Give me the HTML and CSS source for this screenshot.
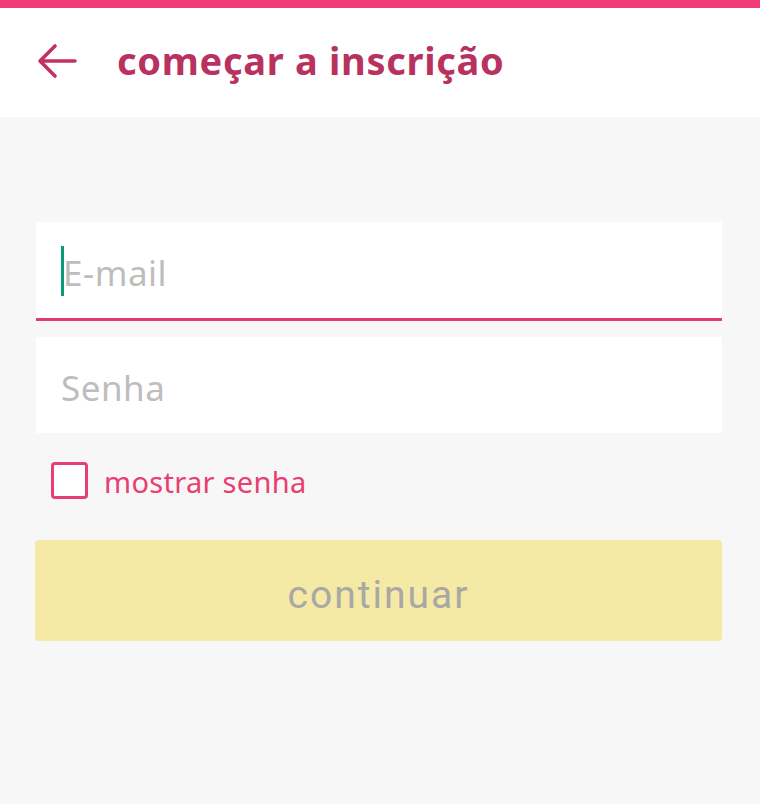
FILE: index.html
```html
<!DOCTYPE html>
<html lang="pt">
<head>
<meta charset="utf-8">
<link rel="stylesheet" href="styles.css">
</head>
<body>
<div class="topbar"></div>
<header class="header">
  <svg class="back" width="40" height="36" viewBox="0 0 40 36">
    <path d="M38 18H3M18 3L3 18L18 33" fill="none" stroke="#c2315f" stroke-width="3.6" stroke-linecap="round" stroke-linejoin="round"/>
  </svg>
  <h1 class="title">começar a inscrição</h1>
</header>
<main class="content">
  <div class="field field-active">
    <span class="caret"></span>
    <span class="placeholder">E-mail</span>
  </div>
  <div class="field">
    <span class="placeholder">Senha</span>
  </div>
  <label class="check">
    <span class="box"></span>
    <span class="check-label">mostrar senha</span>
  </label>
  <div class="button">continuar</div>
</main>
</body>
</html>
```

FILE: styles.css
```css
html, body {
  margin: 0;
  padding: 0;
}
body {
  width: 760px;
  height: 804px;
  background: #f7f7f7;
  font-family: "Noto Sans", "Open Sans", sans-serif;
  overflow: hidden;
}
.topbar {
  height: 8px;
  background: #f03b77;
}
.header {
  height: 109px;
  background: #ffffff;
  display: flex;
  align-items: center;
  padding-left: 37px;
  box-sizing: border-box;
}
.back {
  margin-top: -4px;
}
.title {
  margin: -5px 0 0 40px;
  font-size: 38px;
  font-weight: 700;
  color: #b9325f;
  letter-spacing: 0.7px;
}
.content {
  padding: 105px 38px 0 36px;
  display: flex;
  flex-direction: column;
}
.field {
  height: 96px;
  background: #ffffff;
  display: flex;
  align-items: center;
  padding-left: 25px;
  box-sizing: border-box;
  position: relative;
}
.field-active {
  height: 99px;
  border-bottom: 3px solid #e43c70;
  margin-bottom: 16px;
}
.caret {
  width: 3px;
  height: 50px;
  background: #0a9a7a;
  margin-right: -1px;
  margin-top: 2px;
}
.placeholder {
  font-size: 35px;
  letter-spacing: 0.5px;
  color: #bdbdbd;
  margin-top: 4px;
}
.check {
  display: flex;
  align-items: center;
  height: 37px;
  margin-top: 29px;
  padding-left: 15px;
}
.box {
  width: 31px;
  height: 31px;
  border: 3px solid #e83e72;
  border-radius: 4px;
  background: #fff;
}
.check-label {
  margin-left: 16px;
  margin-top: 2px;
  font-size: 29px;
  letter-spacing: 0.3px;
  color: #e83e72;
}
.button {
  margin-top: 41px;
  margin-left: -1px;
  height: 101px;
  background: #f5e9a6;
  border-radius: 4px;
  display: flex;
  align-items: center;
  justify-content: center;
  padding-top: 8px;
  box-sizing: border-box;
  font-family: Roboto, "Noto Sans", sans-serif;
  font-size: 39px;
  letter-spacing: 2px;
  color: #a8a8a4;
}
```
